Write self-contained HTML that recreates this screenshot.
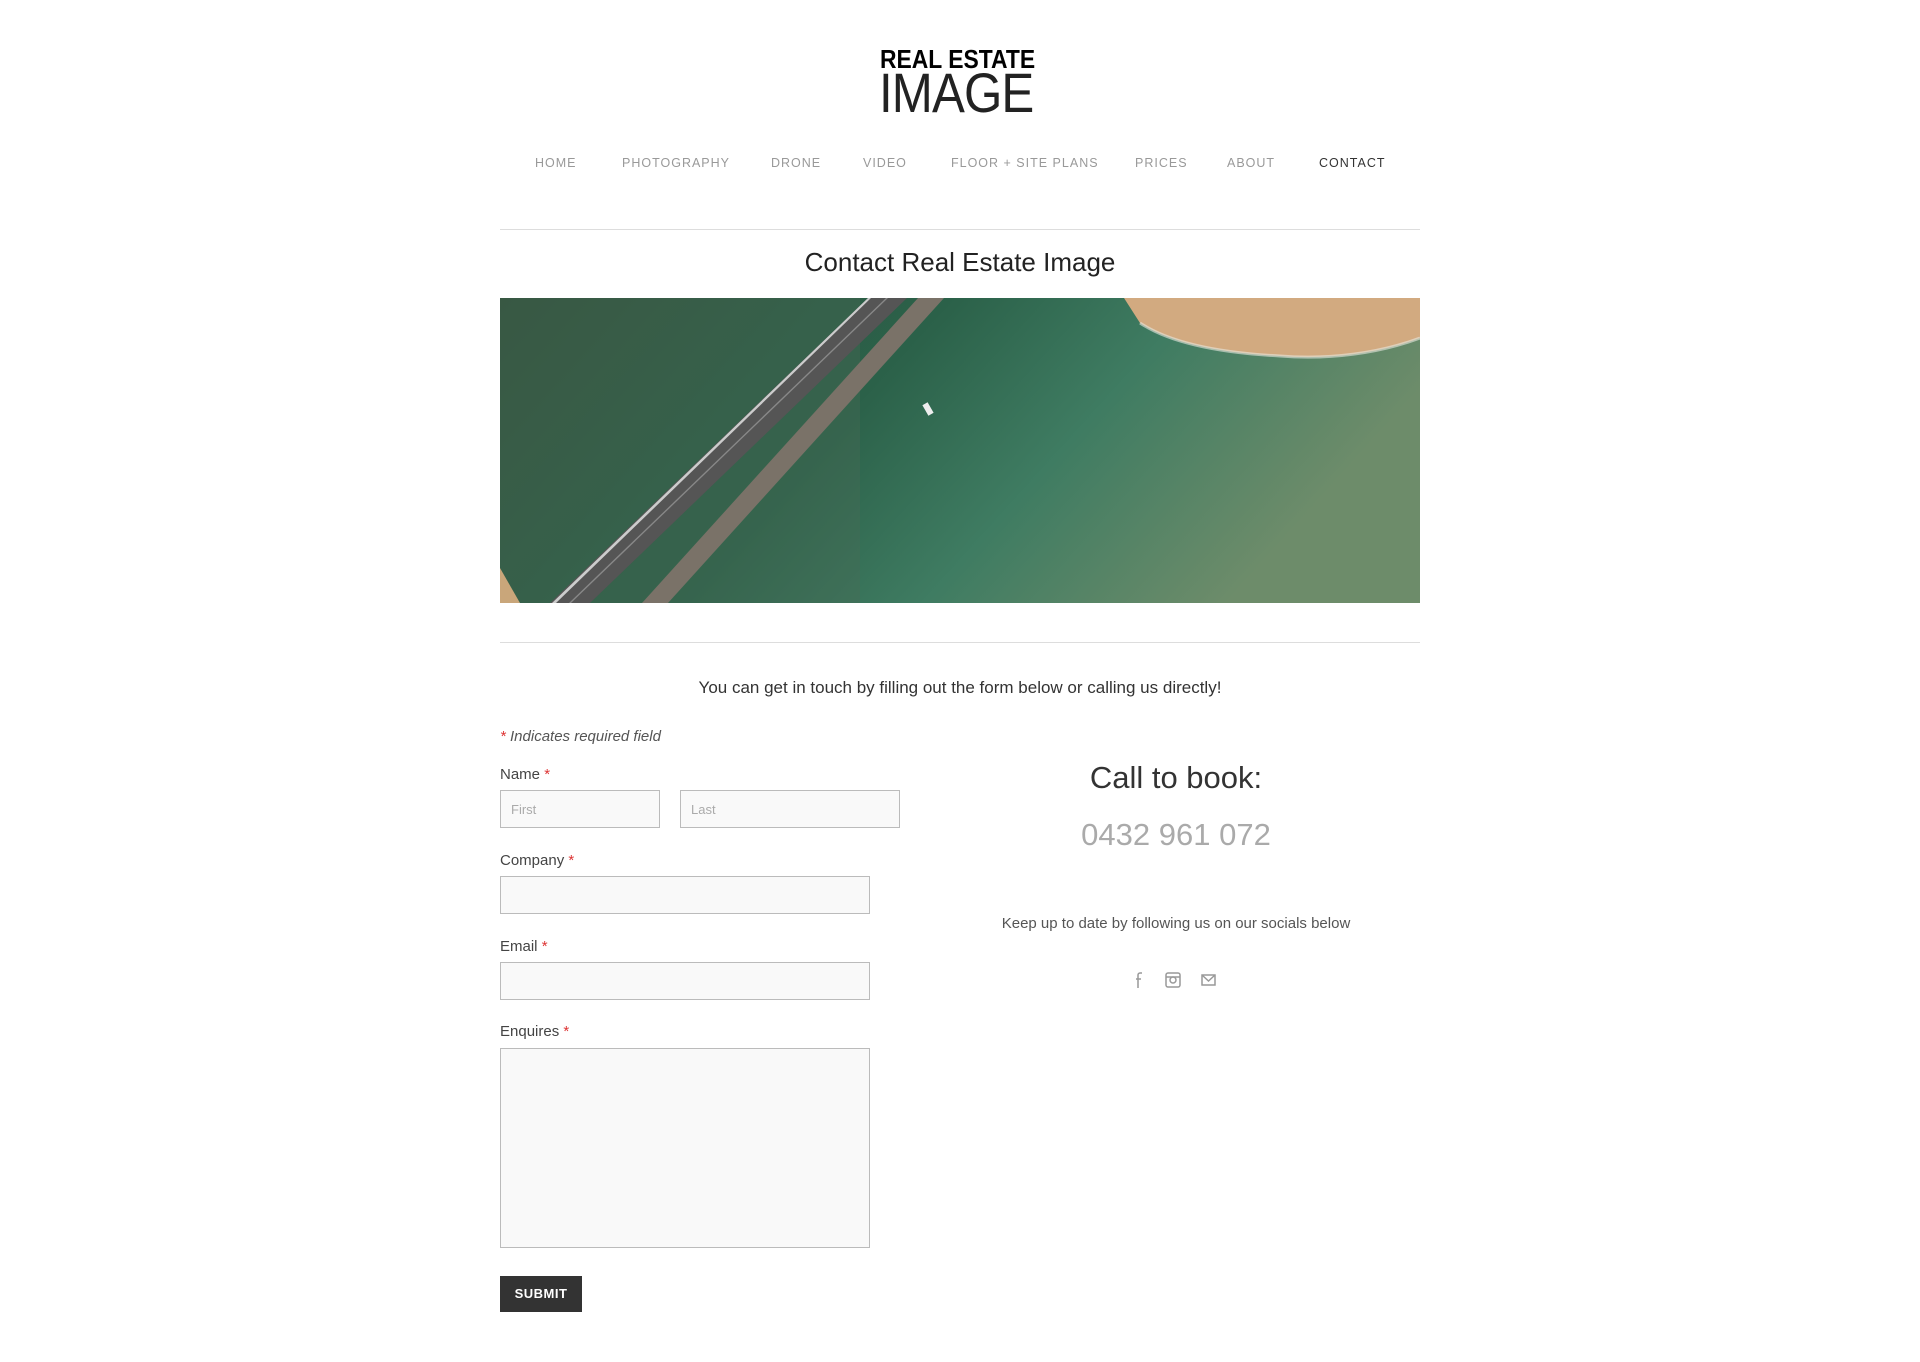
<!DOCTYPE html>
<html><head><meta charset="utf-8"><style>
*{box-sizing:border-box;margin:0;padding:0}
body{width:1920px;height:1362px;background:#fff;font-family:"Liberation Sans",sans-serif;color:#333;position:relative;overflow:hidden}
.a{position:absolute}
.nav{top:156px;font-size:12.5px;letter-spacing:1px;color:#999;white-space:nowrap}
.hr{left:500px;width:920px;height:1px;background:#ddd}
.lbl{left:500px;font-size:15px;color:#444}
.lbl b{color:#d33;font-weight:normal}
.in{background:#f9f9f9;border:1px solid #bbb}
.ph{font-size:13px;color:#aaa;padding:11px 10px}
</style></head><body>
<div class="a" style="left:880px;top:45px;white-space:nowrap;font-size:26px;line-height:28px;font-weight:bold;color:#000;transform:scaleX(.88);transform-origin:left">REAL ESTATE</div>
<div class="a" style="left:879px;top:68px;white-space:nowrap;font-size:56px;line-height:50px;color:#222;transform:scaleX(.88);transform-origin:left;letter-spacing:-1px">IMAGE</div>
<div class="a nav" style="left:535px">HOME</div>
<div class="a nav" style="left:622px">PHOTOGRAPHY</div>
<div class="a nav" style="left:771px">DRONE</div>
<div class="a nav" style="left:863px">VIDEO</div>
<div class="a nav" style="left:951px">FLOOR + SITE PLANS</div>
<div class="a nav" style="left:1135px">PRICES</div>
<div class="a nav" style="left:1227px">ABOUT</div>
<div class="a nav" style="left:1319px;color:#333">CONTACT</div>
<div class="a hr" style="top:229px"></div>
<div class="a" style="left:500px;width:920px;top:247px;text-align:center;font-size:26px;color:#222">Contact Real Estate Image</div>
<svg class="a" style="left:500px;top:298px" width="920" height="305" viewBox="0 0 920 305">
<defs>
<linearGradient id="w" x1="0" y1="0" x2="1" y2="0.3"><stop offset="0" stop-color="#2f4f3a"/><stop offset=".45" stop-color="#2b6149"/><stop offset=".7" stop-color="#3f7c62"/><stop offset="1" stop-color="#6d8c6a"/></linearGradient>
</defs>
<rect width="920" height="305" fill="url(#w)"/>
<rect x="0" y="0" width="360" height="305" fill="#4a6a55" opacity=".35"/>
<path d="M624 0 L920 0 L920 40 C880 55 830 62 780 58 C720 55 670 45 640 25 Z" fill="#d2aa80"/>
<path d="M640 25 C670 45 720 55 780 58 C830 62 880 55 920 40" stroke="#e8e8e0" stroke-width="3" fill="none" opacity=".6"/>
<path d="M0 270 L20 305 L0 305Z" fill="#c9a67a"/>
<polygon points="50,305 90,305 407,0 368,0" fill="#555"/>
<polygon points="52,305 56,305 371,0 368,0" fill="#ccc"/>
<polygon points="69,305 71,305 388,0 386,0" fill="#888"/>
<polygon points="142,305 168,305 444,0 418,0" fill="#7a7268"/>
<rect x="425" y="105" width="6" height="12" fill="#eee" transform="rotate(-30 428 111)"/>
</svg>
<div class="a hr" style="top:642px"></div>
<div class="a" style="left:500px;width:920px;top:678px;text-align:center;font-size:17px;color:#333">You can get in touch by filling out the form below or calling us directly!</div>
<div class="a" style="left:500px;top:728px;font-size:15px;font-style:italic;color:#555"><span style="color:#d33">*</span> Indicates required field</div>
<div class="a lbl" style="top:766px">Name <b>*</b></div>
<div class="a in ph" style="left:500px;top:790px;width:160px;height:38px">First</div>
<div class="a in ph" style="left:680px;top:790px;width:220px;height:38px">Last</div>
<div class="a lbl" style="top:852px">Company <b>*</b></div>
<div class="a in" style="left:500px;top:876px;width:370px;height:38px"></div>
<div class="a lbl" style="top:938px">Email <b>*</b></div>
<div class="a in" style="left:500px;top:962px;width:370px;height:38px"></div>
<div class="a lbl" style="top:1023px">Enquires <b>*</b></div>
<div class="a in" style="left:500px;top:1048px;width:370px;height:200px"></div>
<div class="a" style="left:500px;top:1276px;width:82px;height:36px;background:#333;color:#fff;font-size:13px;font-weight:bold;text-align:center;line-height:36px;letter-spacing:.5px">SUBMIT</div>
<div class="a" style="left:976px;width:400px;top:760px;text-align:center;font-size:31px;color:#333">Call to book:</div>
<div class="a" style="left:976px;width:400px;top:817px;text-align:center;font-size:31px;color:#aaa">0432 961 072</div>
<div class="a" style="left:926px;width:500px;top:915px;text-align:center;font-size:15px;color:#555">Keep up to date by following us on our socials below</div>
<svg class="a" style="left:1130px;top:970px" width="90" height="20" viewBox="0 0 90 20" fill="none" stroke="#999" stroke-width="1.5">
<path d="M12 3 h-2 a2 2 0 0 0-2 2 v13 M6 9 h5"/>
<rect x="36" y="3" width="14" height="14" rx="2"/><circle cx="43" cy="10" r="3"/><path d="M36 7h14"/>
<rect x="72" y="5" width="13" height="10"/><path d="M72 5l6.5 6 6.5-6"/>
</svg>
</body></html>
